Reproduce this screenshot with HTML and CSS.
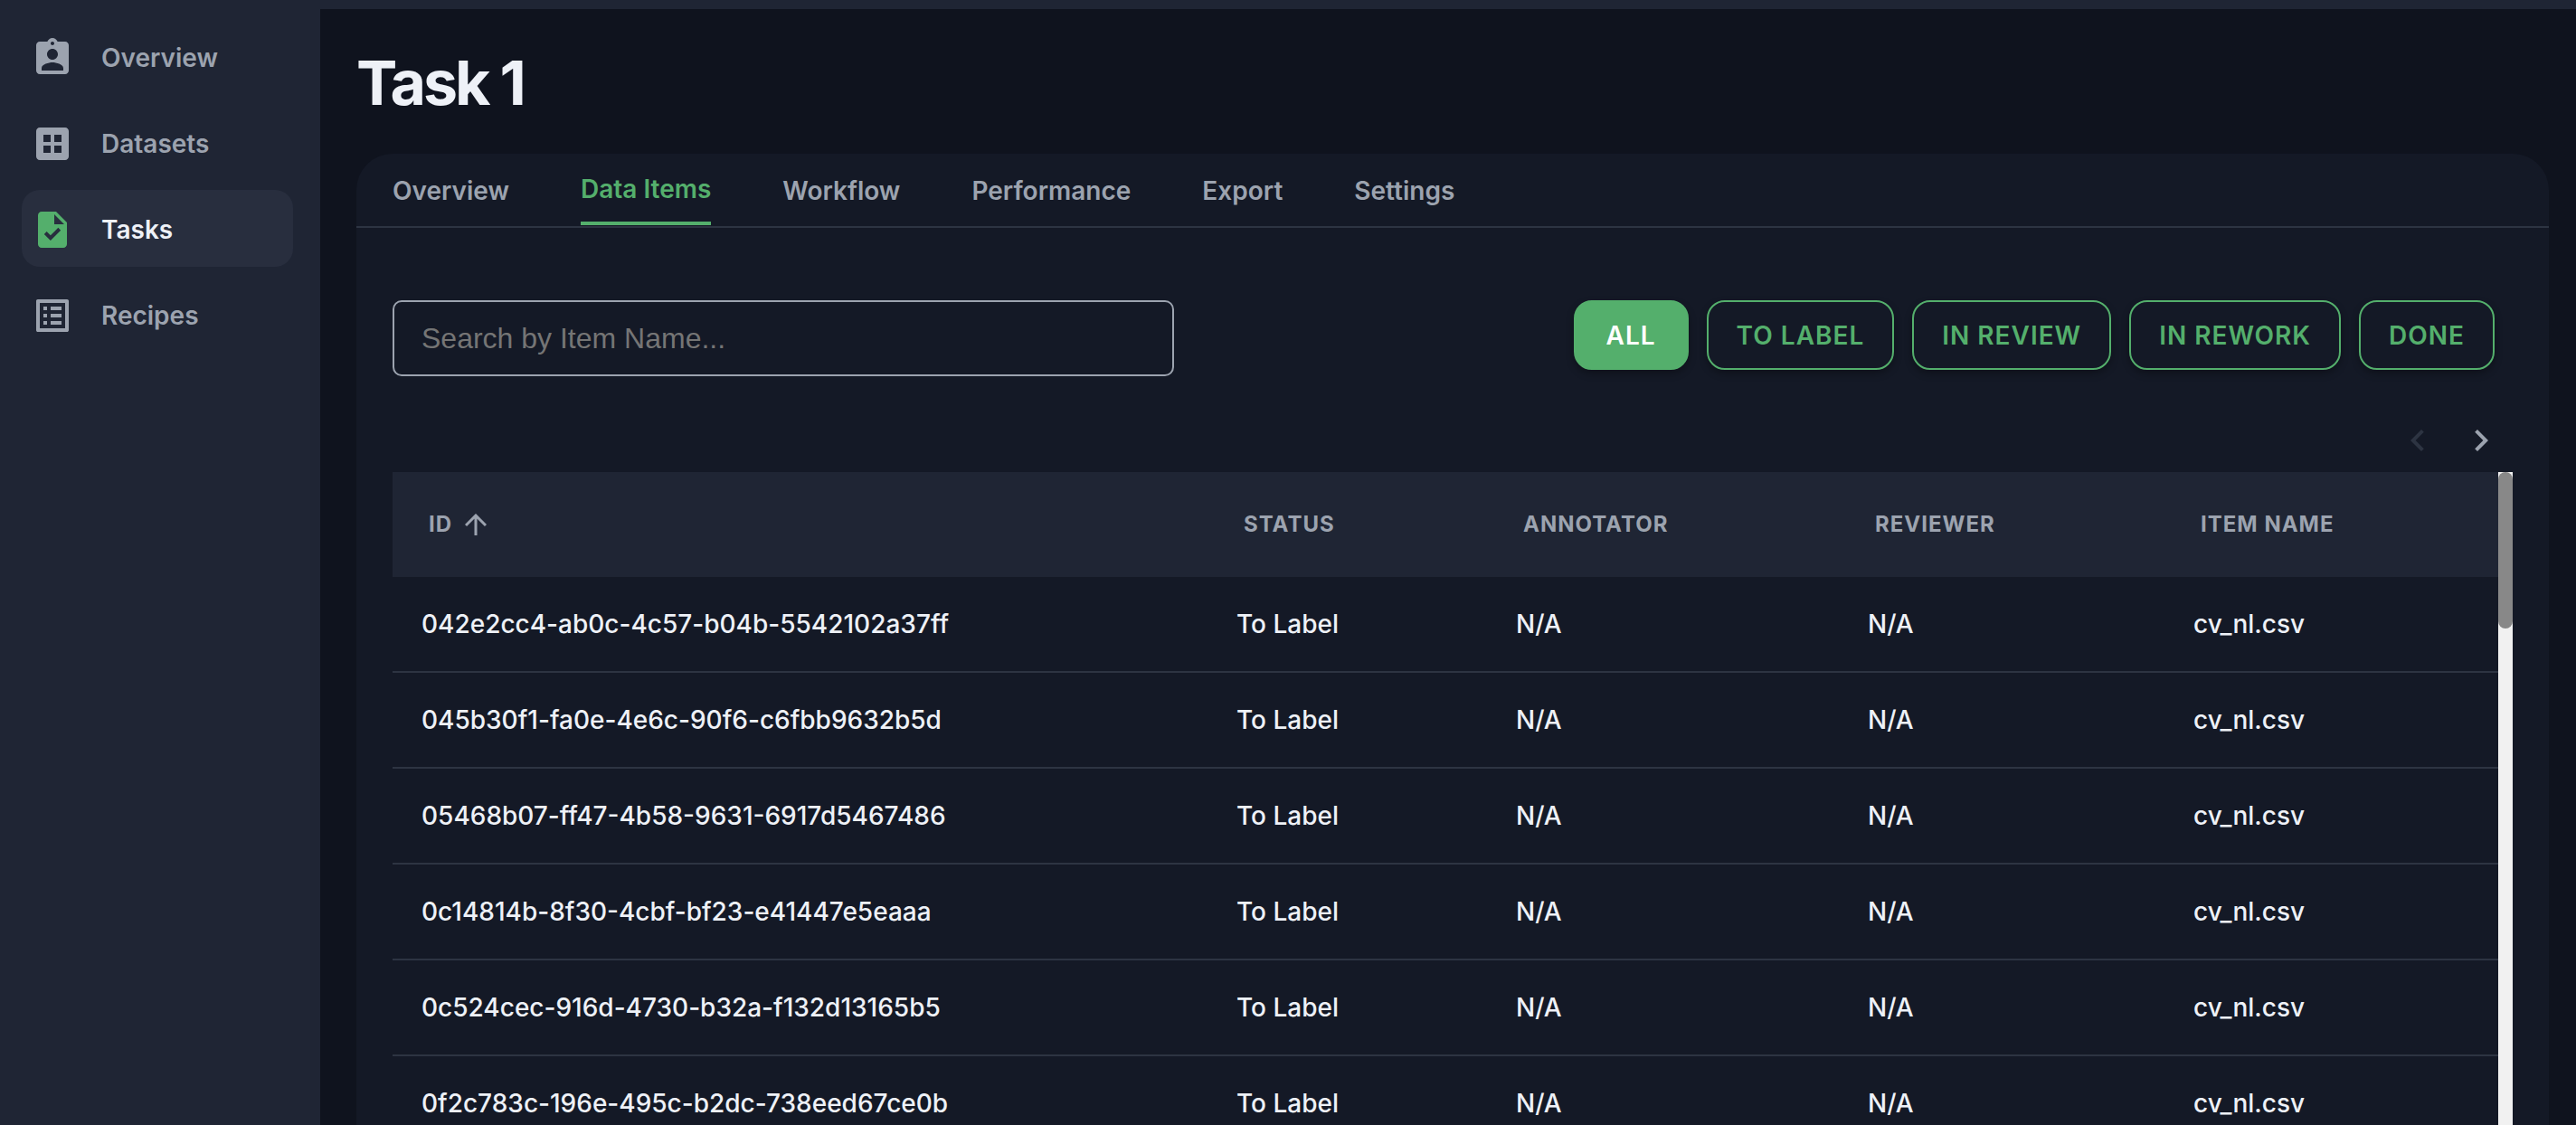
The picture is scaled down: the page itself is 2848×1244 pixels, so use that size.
FILE: index.html
```html
<!DOCTYPE html>
<html lang="en">
<head>
<meta charset="utf-8">
<title>Task 1</title>
<link rel="stylesheet" href="styles.css">
</head>
<body>
<div class="topbar"></div>
<div class="shell">
  <nav class="sidebar" aria-label="Main">
    <a class="nav-item" href="#overview">
      <svg class="icon" viewBox="0 0 24 24"><path d="M19 3h-4.18C14.4 1.84 13.3 1 12 1c-1.3 0-2.4.84-2.82 2H5c-1.1 0-2 .9-2 2v14c0 1.1.9 2 2 2h14c1.1 0 2-.9 2-2V5c0-1.1-.9-2-2-2zm-7 0c.55 0 1 .45 1 1s-.45 1-1 1-1-.45-1-1 .45-1 1-1zm0 4c1.66 0 3 1.34 3 3s-1.34 3-3 3-3-1.34-3-3 1.34-3 3-3zm6 12H6v-1.4c0-2 4-3.1 6-3.1s6 1.1 6 3.1V19z"/></svg>
      <span>Overview</span>
    </a>
    <a class="nav-item" href="#datasets">
      <svg class="icon" viewBox="0 0 24 24"><path fill-rule="evenodd" d="M19 3H5c-1.1 0-2 .9-2 2v14c0 1.1.9 2 2 2h14c1.1 0 2-.9 2-2V5c0-1.1-.9-2-2-2zM7 7h4v4H7zM13 7h4v4h-4zM7 13h4v4H7zM13 13h4v4h-4z"/></svg>
      <span>Datasets</span>
    </a>
    <a class="nav-item active" href="#tasks" aria-current="page">
      <svg class="icon" viewBox="0 0 24 24"><path d="M14 2H6c-1.1 0-1.99.9-1.99 2L4 20c0 1.1.89 2 1.99 2H18c1.1 0 2-.9 2-2V8l-6-6zm-3.06 16L7.4 14.46l1.41-1.41 2.12 2.12 4.24-4.24 1.41 1.41L10.94 18zM13 9V3.5L18.5 9H13z"/></svg>
      <span>Tasks</span>
    </a>
    <a class="nav-item" href="#recipes">
      <svg class="icon" viewBox="0 0 24 24"><path d="M19 5v14H5V5h14m1.1-2H3.9c-.5 0-.9.4-.9.9v16.2c0 .4.4.9.9.9h16.2c.4 0 .9-.5.9-.9V3.9c0-.5-.5-.9-.9-.9zM11 7h6v2h-6V7zm0 4h6v2h-6v-2zm0 4h6v2h-6zM7 7h2v2H7zm0 4h2v2H7zm0 4h2v2H7z"/></svg>
      <span>Recipes</span>
    </a>
  </nav>
  <main class="main">
    <h1 class="title">Task 1</h1>
    <section class="card">
      <nav class="tabs" aria-label="Task sections">
        <a class="tab" href="#t-overview">Overview</a>
        <a class="tab active" href="#t-items" aria-current="page">Data Items</a>
        <a class="tab" href="#t-workflow">Workflow</a>
        <a class="tab" href="#t-performance">Performance</a>
        <a class="tab" href="#t-export">Export</a>
        <a class="tab" href="#t-settings">Settings</a>
      </nav>
      <div class="panel">
        <div class="toolbar">
          <input class="search" type="text" placeholder="Search by Item Name..." aria-label="Search by Item Name">
          <div class="filters">
            <button class="filter active" type="button">ALL</button>
            <button class="filter" type="button">TO LABEL</button>
            <button class="filter" type="button">IN REVIEW</button>
            <button class="filter" type="button">IN REWORK</button>
            <button class="filter" type="button">DONE</button>
          </div>
        </div>
        <div class="pager">
          <button class="page-btn" type="button" aria-label="Previous page" disabled><svg class="icon" viewBox="0 0 24 24"><path d="M15.410 7.410 14 6l-6 6 6 6 1.410-1.410L10.830 12z"/></svg></button>
          <button class="page-btn" type="button" aria-label="Next page"><svg class="icon" viewBox="0 0 24 24"><path d="M10 6 8.590 7.410 13.170 12l-4.580 4.590L10 18l6-6z"/></svg></button>
        </div>
        <div class="table-area">
          <table class="items">
            <colgroup><col class="c-id"><col class="c-status"><col class="c-annotator"><col class="c-reviewer"><col class="c-name"></colgroup>
            <thead>
              <tr>
                <th scope="col" aria-sort="ascending"><span class="sort">ID <svg class="arrow" viewBox="0 0 24 24"><path d="M12 24V2M1 13 12 2l11 11"/></svg></span></th>
                <th scope="col">STATUS</th><th scope="col">ANNOTATOR</th><th scope="col">REVIEWER</th><th scope="col">ITEM NAME</th>
              </tr>
            </thead>
            <tbody>
              <tr><td>042e2cc4-ab0c-4c57-b04b-5542102a37ff</td><td>To Label</td><td>N/A</td><td>N/A</td><td>cv_nl.csv</td></tr>
              <tr><td>045b30f1-fa0e-4e6c-90f6-c6fbb9632b5d</td><td>To Label</td><td>N/A</td><td>N/A</td><td>cv_nl.csv</td></tr>
              <tr><td>05468b07-ff47-4b58-9631-6917d5467486</td><td>To Label</td><td>N/A</td><td>N/A</td><td>cv_nl.csv</td></tr>
              <tr><td>0c14814b-8f30-4cbf-bf23-e41447e5eaaa</td><td>To Label</td><td>N/A</td><td>N/A</td><td>cv_nl.csv</td></tr>
              <tr><td>0c524cec-916d-4730-b32a-f132d13165b5</td><td>To Label</td><td>N/A</td><td>N/A</td><td>cv_nl.csv</td></tr>
              <tr><td>0f2c783c-196e-495c-b2dc-738eed67ce0b</td><td>To Label</td><td>N/A</td><td>N/A</td><td>cv_nl.csv</td></tr>
            </tbody>
          </table>
          <div class="scroll-track"><div class="scroll-thumb"></div></div>
        </div>
      </div>
    </section>
  </main>
</div>
</body>
</html>
```
FILE: styles.css
```css
* { box-sizing: border-box; }

body {
  margin: 0;
  height: 100vh;
  overflow: hidden;
  display: flex;
  flex-direction: column;
  background: #0f131e;
  color: #eef1f7;
  font-family: Inter, "Liberation Sans", sans-serif;
  font-size: 28px;
  line-height: 40px;
}

a { color: inherit; text-decoration: none; }
button { font: inherit; }

.icon { width: 48px; height: 48px; fill: currentColor; display: block; flex: none; }

.topbar { flex: none; height: 10px; background: #1f2534; }

.shell { flex: 1; min-height: 0; display: flex; }

.sidebar {
  flex: none;
  width: 354px;
  padding: 10px 30px 0 24px;
  display: flex;
  flex-direction: column;
  gap: 10px;
  background: #1f2534;
  color: #9ca3af;
  font-weight: 600;
}

.nav-item {
  display: flex;
  align-items: center;
  gap: 30px;
  height: 85px;
  padding: 2px 10px 0;
  border-radius: 20px;
}
.nav-item.active { background: #282e3e; color: #eef1f7; }
.nav-item.active .icon { color: #54af6c; }

.main { flex: 1; min-width: 0; padding: 41px 30px 0 40px; }

.title {
  margin: 0 0 39px;
  font-size: 68px;
  line-height: 80px;
  font-weight: 700;
  letter-spacing: -3px;
}

.card { background: #141926; border-radius: 40px 40px 0 0; }

.tabs {
  display: flex;
  gap: 79px;
  height: 82px;
  padding: 0 40px;
  border-bottom: 2px solid #2d3442;
  color: #9ca3af;
  font-weight: 600;
}
.tab { height: 80px; padding-top: 21px; }
.tab.active { height: 79px; padding-top: 19px; color: #54af6c; border-bottom: 4px solid #54af6c; }

.panel { padding: 80px 40px 0; }

.toolbar {
  display: flex;
  justify-content: space-between;
  align-items: flex-start;
  padding-right: 20px;
}

.search {
  width: 864px;
  max-width: 40%;
  height: 84px;
  padding: 0 30px;
  border: 2px solid #9ca3af;
  border-radius: 10px;
  background: transparent;
  color: #eef1f7;
  font-family: "Liberation Sans", Arial, sans-serif;
  font-size: 32px;
}
.search::placeholder { color: #757575; opacity: 1; }

.filters { display: flex; gap: 20px; }
.filter {
  height: 77px;
  padding: 0 31px;
  border: 2px solid #54af6c;
  border-radius: 20px;
  background: #141926;
  color: #54af6c;
  font-weight: 600;
  letter-spacing: 1px;
  box-shadow: 0 4px 8px rgba(0, 0, 0, 0.3);
}
.filter.active { padding: 0 34px; background: #54af6c; color: #ffffff; }

.pager {
  display: flex;
  justify-content: flex-end;
  gap: 22px;
  padding: 47px 11px 11px 0;
}
.page-btn { padding: 0; border: 0; background: none; color: #9ca3af; }
.page-btn:disabled { color: #2d3442; }

.table-area { display: flex; }

.items { flex: 1; border-collapse: separate; border-spacing: 0; table-layout: fixed; }
.c-id { width: 901px; }
.c-status { width: 309px; }
.c-annotator { width: 389px; }
.c-reviewer { width: 360px; }
.c-name { width: 369px; }

.items th {
  height: 116px;
  padding: 0 40px;
  text-align: left;
  background: #1f2534;
  color: #9ca3af;
  font-size: 24px;
  font-weight: 700;
  letter-spacing: 1px;
}
.items td { height: 106px; padding: 0 32px; border-bottom: 2px solid #2d3442; font-weight: 500; }

.sort { display: flex; align-items: center; gap: 14px; }
.arrow { width: 24px; height: 24px; fill: none; stroke: currentColor; stroke-width: 3; }

.scroll-track { flex: none; width: 16px; background: #f1f1f1; }
.scroll-thumb { height: 173px; border-radius: 8px; background: #888888; }
```
